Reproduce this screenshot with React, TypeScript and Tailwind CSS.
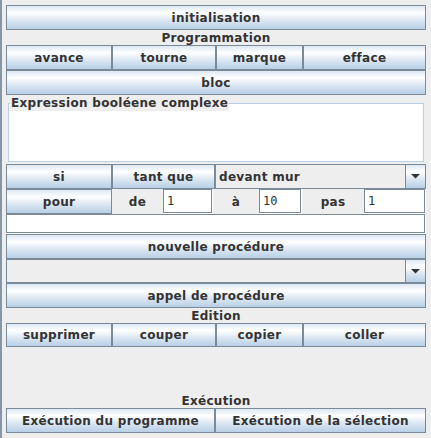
const grad =
  "bg-[linear-gradient(to_bottom,#dde8f3_0%,#ffffff_30%,#dde8f3_60%,#b8cfe5_100%)]";

function Button({ label, className = "" }: { label: string; className?: string }) {
  return (
    <div
      className={`flex shrink-0 items-center justify-center border border-[#7a8a99] ${grad} text-[12px] font-bold tracking-[0.3px] text-[#333333] ${className}`}
    >
      {label}
    </div>
  );
}

function Label({ text, className = "" }: { text: string; className?: string }) {
  return (
    <div
      className={`flex shrink-0 items-center justify-center text-[12px] font-bold tracking-[0.3px] text-[#333333] ${className}`}
    >
      {text}
    </div>
  );
}

function Field({ value = "", className = "" }: { value?: string; className?: string }) {
  return (
    <div className={`flex shrink-0 border-r border-b border-white ${className}`}>
      <div className="flex flex-1 items-center border border-[#7a8a99] bg-white pl-[3px] font-['DejaVu_Sans_Mono',monospace] text-[12px] text-[#333333]">
        {value}
      </div>
    </div>
  );
}

function Combo({ value = "", className = "" }: { value?: string; className?: string }) {
  return (
    <div className={`flex shrink-0 border border-[#7a8a99] bg-[#eeeeee] ${className}`}>
      <div className="flex flex-1 items-center pl-[3px] text-[12px] font-bold tracking-[0.3px] text-[#333333]">
        {value}
      </div>
      <div className={`flex w-[20px] items-center justify-center border-l border-[#7a8a99] ${grad}`}>
        <svg width="9" height="5" viewBox="0 0 9 5">
          <polygon points="0,0 9,0 4.5,4.5" fill="#333333" />
        </svg>
      </div>
    </div>
  );
}

export default function App() {
  return (
    <div className="flex h-[438px] w-[431px] flex-col overflow-hidden border-l-2 border-[#8497aa] bg-[#eeeeee] pt-[5px] pr-[5px] pl-[4px] font-['DejaVu_Sans',sans-serif]">
      <Button label="initialisation" className="h-[25px] w-full" />
      <Label text="Programmation" className="h-[15px]" />

      <div className="flex h-[25px]">
        <Button label="avance" className="w-[106px]" />
        <Button label="tourne" className="w-[104px]" />
        <Button label="marque" className="w-[87px]" />
        <Button label="efface" className="w-[123px]" />
      </div>
      <Button label="bloc" className="h-[25px] w-full" />

      <div className="flex h-[69px] shrink-0 flex-col px-[2px] pt-[8px] pb-[2px]">
        <div className="relative flex-1 border border-[#b8cfe5] bg-white">
          <div className="absolute top-[-8px] left-[1px] bg-[#eeeeee] px-[1px] text-[12px] leading-[15px] font-bold tracking-[0.3px] text-[#333333]">
            Expression booléene complexe
          </div>
        </div>
      </div>

      <div className="flex h-[25px]">
        <Button label="si" className="w-[106px]" />
        <Button label="tant que" className="w-[103px]" />
        <Combo value="devant mur" className="w-[211px]" />
      </div>

      <div className="flex h-[25px]">
        <Button label="pour" className="w-[106px]" />
        <Label text="de" className="w-[51px]" />
        <Field value="1" className="w-[50px]" />
        <Label text="à" className="w-[46px]" />
        <Field value="10" className="w-[43px]" />
        <Label text="pas" className="w-[62px]" />
        <Field value="1" className="w-[62px]" />
      </div>

      <Field className="h-[20px] w-full" />
      <Button label="nouvelle procédure" className="h-[25px] w-full" />
      <Combo className="h-[24px] w-full" />
      <Button label="appel de procédure" className="h-[25px] w-full" />

      <Label text="Edition" className="h-[15px]" />
      <div className="flex h-[24px]">
        <Button label="supprimer" className="w-[106px]" />
        <Button label="couper" className="w-[104px]" />
        <Button label="copier" className="w-[87px]" />
        <Button label="coller" className="w-[123px]" />
      </div>

      <div className="h-[46px] shrink-0" />

      <Label text="Exécution" className="h-[15px]" />
      <div className="flex h-[25px]">
        <Button label="Exécution du programme" className="w-[209px]" />
        <Button label="Exécution de la sélection" className="w-[211px]" />
      </div>
    </div>
  );
}
